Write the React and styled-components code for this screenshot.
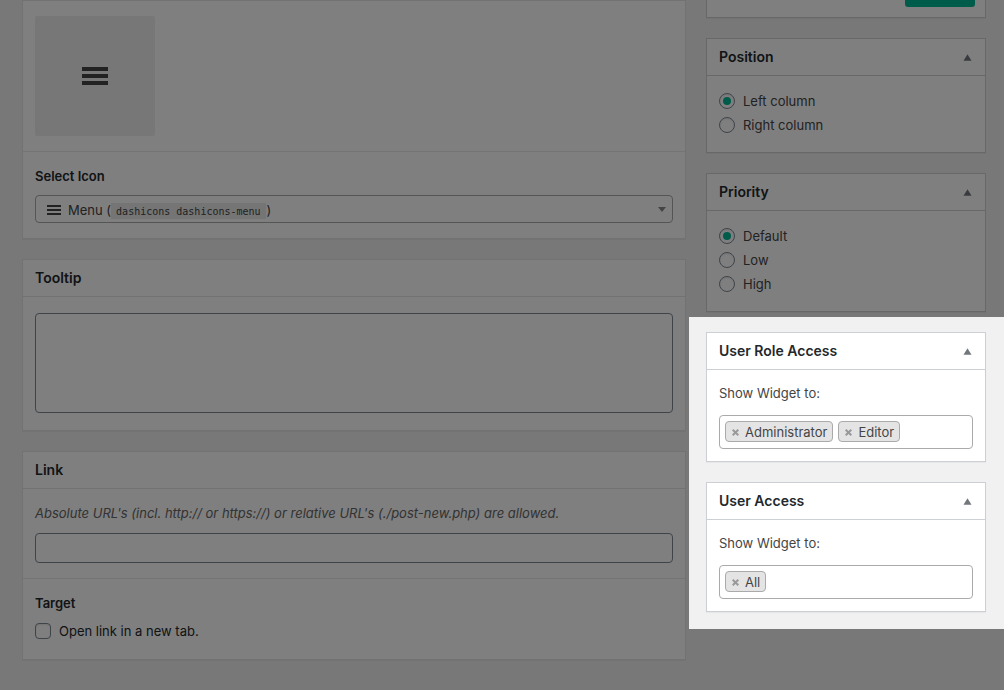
import React, { useState } from "react";
import styled, { createGlobalStyle } from "styled-components";

const GlobalStyle = createGlobalStyle`
  *, *::before, *::after { box-sizing: border-box; }
  html, body { margin: 0; background: #f1f1f1; }
  body {
    color: #444;
    font-family: Inter, "Liberation Sans", sans-serif;
    font-size: 13px;
    line-height: 20px;
    overflow-x: hidden;
  }
  button, input, select, textarea { font: inherit; color: inherit; margin: 0; }
`;

const Page = styled.div`
  display: flex;
  align-items: flex-start;
  gap: 3px;
  min-height: 100vh;
  padding-left: 22px;
  overflow: hidden;
`;

const Main = styled.main`
  flex: 1;
  min-width: 0;
  display: flex;
  flex-direction: column;
  gap: 20px;
  padding-bottom: 30px;
`;

const Sidebar = styled.aside`
  flex: 0 0 315px;
  display: flex;
  flex-direction: column;
`;

const SideGroup = styled.div`
  display: flex;
  flex-direction: column;
  gap: 20px;
  padding: 0 18px 5px 17px;
`;

/* The highlighted group stays bright while its shadow dims the rest of the page. */
const Spotlight = styled(SideGroup)`
  position: relative;
  z-index: 1;
  padding: 15px 18px 17px 17px;
  background: #f1f1f1;
  box-shadow: 0 0 0 3000px rgba(0, 0, 0, 0.5);
`;

const Card = styled.section`
  --line: ${(p) => (p.$soft ? "#e5e5e5" : "#ccd0d4")};
  background: #fff;
  border: 1px solid var(--line);
  box-shadow: 0 1px 1px rgba(0, 0, 0, 0.04);
`;

const PublishCard = styled(Card)`
  display: flex;
  justify-content: flex-end;
  padding: 0 10px 10px;
  border-top: 0;
`;

const PublishButton = styled.button`
  width: 70px;
  height: 7px;
  padding: 0;
  border: 0;
  border-radius: 0 0 3px 3px;
  background: #00b894;
`;

const CardHeader = styled.header`
  display: flex;
  align-items: center;
  justify-content: space-between;
  height: 37px;
  padding: 0 11px 0 12px;
  border-bottom: 1px solid var(--line);
`;

const Title = styled.h2`
  margin: 0;
  color: #23282d;
  font-size: 14px;
  font-weight: 600;
  line-height: 20px;
`;

const ToggleButton = styled.button`
  display: flex;
  padding: 2px;
  border: 0;
  background: none;
  color: #72777c;
`;

const Block = styled.div`
  padding: 15px 12px;
  & + & { border-top: 1px solid #e9e9e9; }
`;

const TextBlock = styled(Block)`
  padding: 14px 12px 15px;
`;

const LastBlock = styled(Block)`
  padding: 14px 12px 18px;
`;

const Preview = styled.div`
  display: flex;
  align-items: center;
  justify-content: center;
  width: 120px;
  height: 120px;
  border-radius: 2px;
  background: #eee;
  color: #444;
`;

const FieldLabel = styled.label`
  display: block;
  margin-bottom: 9px;
  color: #23282d;
  font-weight: 600;
`;

const Legend = styled.h3`
  margin: 0 0 8px;
  color: #23282d;
  font-size: 13px;
  font-weight: 600;
`;

const SelectBox = styled.div`
  position: relative;
  display: flex;
  align-items: center;
  height: 28px;
  padding: 2px 6px 0 11px;
  border: 1px solid #aaa;
  border-radius: 4px;
  background: #fff;
`;

const NativeSelect = styled.select`
  position: absolute;
  inset: 0;
  width: 100%;
  opacity: 0;
`;

const SelectText = styled.span`
  flex: 1;
  padding: 2px 0 0 7px;
  white-space: nowrap;
`;

const Code = styled.code`
  margin: 0 1px 0 0;
  padding: 3px 5px 2px;
  background: #eaeaea;
  font-family: "DejaVu Sans Mono", monospace;
  font-size: 10px;
`;

const TextBox = styled.input`
  display: block;
  width: 100%;
  height: 30px;
  padding: 0 8px;
  border: 1px solid #7e8993;
  border-radius: 4px;
  background: #fff;
`;

const TextArea = styled(TextBox).attrs({ as: "textarea" })`
  height: 100px;
  margin: 1px 0 2px;
  resize: none;
`;

const Hint = styled.p`
  margin: 0 0 10px;
  color: #666;
  font-style: italic;
`;

const Choice = styled.label`
  display: flex;
  align-items: center;
  gap: 8px;
  line-height: ${(p) => (p.$tall ? "24px" : "20px")};
  color: ${(p) => (p.$dark ? "#23282d" : "#444")};
`;

const Tick = styled.input`
  appearance: none;
  flex: none;
  display: grid;
  place-items: center;
  width: 16px;
  height: 16px;
  border: 1px solid #7e8993;
  border-radius: ${(p) => (p.type === "radio" ? "50%" : "4px")};
  background: #fff;
  box-shadow: inset 0 1px 2px rgba(0, 0, 0, 0.1);
  &:checked::before {
    content: "";
    width: 8px;
    height: 8px;
    border-radius: ${(p) => (p.type === "radio" ? "50%" : "2px")};
    background: #00b894;
  }
`;

const ChoiceList = styled.div`
  padding: 13px 12px 15px;
`;

const TagBody = styled.div`
  padding: 13px 12px 12px;
`;

const TagLabel = styled.label`
  display: block;
  margin-bottom: 12px;
`;

const TagField = styled.div`
  display: flex;
  align-items: center;
  gap: 5px;
  height: 34px;
  padding: 0 5px 1px;
  border: 1px solid #aaa;
  border-radius: 4px;
  background: #fff;
`;

const Tag = styled.span`
  display: flex;
  align-items: center;
  gap: 6px;
  height: 21px;
  padding: 0 5px 0 6px;
  border: 1px solid #aaa;
  border-radius: 4px;
  background: #e4e4e4;
`;

const RemoveButton = styled.button`
  display: flex;
  padding: 2px 0 0;
  border: 0;
  background: none;
  color: #999;
`;

const TagInput = styled.input`
  flex: 1;
  min-width: 0;
  width: 20px;
  padding: 0;
  border: 0;
  outline: 0;
  background: none;
`;

function MenuIcon({ width, height, bar }) {
  const gap = (height - bar * 3) / 2;
  return (
    <svg width={width} height={height} fill="currentColor" aria-hidden="true">
      {[0, 1, 2].map((i) => (
        <rect key={i} y={i * (bar + gap)} width={width} height={bar} />
      ))}
    </svg>
  );
}

const UpArrow = () => (
  <svg width="9" height="7" viewBox="0 0 9 7" fill="currentColor" aria-hidden="true">
    <path d="M4.5 0.3 8.5 6.7H.5z" />
  </svg>
);

const DownArrow = () => (
  <svg width="8" height="8" viewBox="0 0 8 8" fill="#888" aria-hidden="true">
    <path d="M0 1h8L4 6z" />
  </svg>
);

const CrossIcon = () => (
  <svg width="7" height="7" viewBox="0 0 7 7" stroke="currentColor" strokeWidth="2" aria-hidden="true">
    <path d="M.7.7 6.3 6.3M6.3.7.7 6.3" />
  </svg>
);

function SideCard({ title, children }) {
  return (
    <Card>
      <CardHeader>
        <Title>{title}</Title>
        <ToggleButton type="button" aria-label={`Toggle panel: ${title}`}>
          <UpArrow />
        </ToggleButton>
      </CardHeader>
      {children}
    </Card>
  );
}

function RadioCard({ title, name, options }) {
  const [value, setValue] = useState(options[0]);
  return (
    <SideCard title={title}>
      <ChoiceList role="radiogroup" aria-label={title}>
        {options.map((option) => (
          <Choice key={option} $tall>
            <Tick
              type="radio"
              name={name}
              checked={value === option}
              onChange={() => setValue(option)}
            />
            {option}
          </Choice>
        ))}
      </ChoiceList>
    </SideCard>
  );
}

function TagCard({ title, id, initial }) {
  const [tags, setTags] = useState(initial);
  return (
    <SideCard title={title}>
      <TagBody>
        <TagLabel htmlFor={id}>Show Widget to:</TagLabel>
        <TagField>
          {tags.map((tag) => (
            <Tag key={tag}>
              <RemoveButton
                type="button"
                aria-label={`Remove ${tag}`}
                onClick={() => setTags(tags.filter((t) => t !== tag))}
              >
                <CrossIcon />
              </RemoveButton>
              {tag}
            </Tag>
          ))}
          <TagInput id={id} type="text" />
        </TagField>
      </TagBody>
    </SideCard>
  );
}

export default function App() {
  return (
    <>
      <GlobalStyle />
      <Page>
        <Main>
          <Card $soft>
            <Block>
              <Preview>
                <MenuIcon width={26} height={18} bar={4} />
              </Preview>
            </Block>
            <TextBlock>
              <FieldLabel htmlFor="icon">Select Icon</FieldLabel>
              <SelectBox>
                <MenuIcon width={14} height={10} bar={2} />
                <SelectText>
                  Menu (<Code>dashicons dashicons-menu</Code>)
                </SelectText>
                <DownArrow />
                <NativeSelect id="icon">
                  <option>Menu</option>
                </NativeSelect>
              </SelectBox>
            </TextBlock>
          </Card>

          <Card $soft>
            <CardHeader>
              <Title as="label" htmlFor="tooltip">Tooltip</Title>
            </CardHeader>
            <Block>
              <TextArea id="tooltip" />
            </Block>
          </Card>

          <Card $soft>
            <CardHeader>
              <Title as="label" htmlFor="link">Link</Title>
            </CardHeader>
            <TextBlock>
              <Hint>
                Absolute URL's (incl. http:// or https://) or relative URL's (./post-new.php) are allowed.
              </Hint>
              <TextBox id="link" type="text" />
            </TextBlock>
            <LastBlock>
              <Legend>Target</Legend>
              <Choice $dark>
                <Tick type="checkbox" />
                Open link in a new tab.
              </Choice>
            </LastBlock>
          </Card>
        </Main>

        <Sidebar>
          <SideGroup>
            <PublishCard>
              <PublishButton type="button" aria-label="Update" />
            </PublishCard>
            <RadioCard title="Position" name="position" options={["Left column", "Right column"]} />
            <RadioCard title="Priority" name="priority" options={["Default", "Low", "High"]} />
          </SideGroup>
          <Spotlight>
            <TagCard title="User Role Access" id="roles" initial={["Administrator", "Editor"]} />
            <TagCard title="User Access" id="users" initial={["All"]} />
          </Spotlight>
        </Sidebar>
      </Page>
    </>
  );
}
